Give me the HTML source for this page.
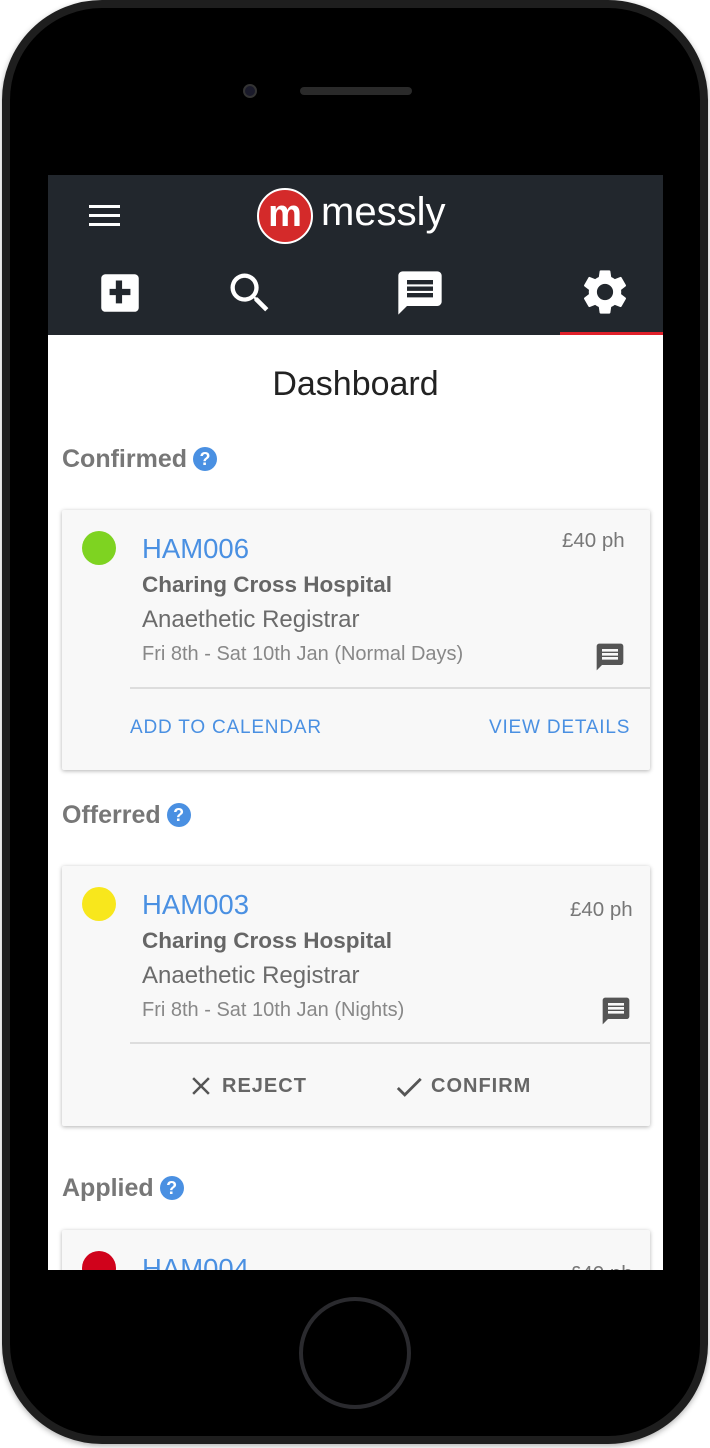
<!DOCTYPE html>
<html><head><meta charset="utf-8"><style>
*{margin:0;padding:0;box-sizing:border-box}
body{width:710px;height:1448px;background:#fff;position:relative;overflow:hidden;font-family:"Liberation Sans",sans-serif}
.a{position:absolute}
.phone{left:2px;top:0;width:706px;height:1444px;background:#000;border-radius:100px;border:8px solid #1e1e1e;box-shadow:0 2px 6px rgba(0,0,0,.3)}
.screen{left:48px;top:175px;width:615px;height:1095px;background:#fff;overflow:hidden}
.hdr{left:0;top:0;width:615px;height:160px;background:#22272d}
.sec{color:#777;font-weight:bold;font-size:25px}
.q{display:inline-block;width:24px;height:24px;border-radius:50%;background:#4a90e2;color:#fff;font-size:18px;text-align:center;line-height:24px;font-weight:bold;vertical-align:2px;margin-left:6px}
.card{left:14px;width:588px;height:260px;background:#f8f8f8;box-shadow:0 1px 4px rgba(0,0,0,.3);border-radius:2px}
.dot{width:34px;height:34px;border-radius:50%}
.id{color:#4a90e2;font-size:27.5px}
.h{color:#666;font-weight:bold;font-size:22.5px}
.r{color:#6b6b6b;font-size:24px}
.d{color:#888;font-size:20px}
.p{color:#777;font-size:20.5px}
.div{left:68px;width:520px;height:2px;background:#ddd}
.btn{color:#4a90e2;font-size:19px;letter-spacing:.8px}
.btn2{color:#666;font-size:20px;letter-spacing:1px;font-weight:bold}
</style></head><body>
<div class="a phone"></div>
<div class="a" style="left:243px;top:84px;width:14px;height:14px;border-radius:50%;background:#1a1a2a;border:2px solid #333"></div>
<div class="a" style="left:300px;top:87px;width:112px;height:8px;border-radius:4px;background:#2a2a2a"></div>
<div class="a" style="left:299px;top:1297px;width:112px;height:112px;border-radius:50%;border:4px solid #2a2a2e"></div>
<div class="a screen">
 <div class="a hdr">
  <div class="a" style="left:41px;top:30px;width:31px;height:3px;background:#fff;box-shadow:0 9px 0 #fff,0 18px 0 #fff"></div>
  <div class="a" style="left:209px;top:13px;width:56px;height:56px;border-radius:50%;background:#d42a2a;border:2px solid #fff;color:#fff;font-weight:bold;font-size:38px;text-align:center;line-height:48px">m</div>
  <div class="a" style="left:273px;top:15px;color:#fff;font-size:40px">messly</div>
  <svg class="a" style="left:47px;top:93px" width="50" height="50" viewBox="0 0 24 24"><path fill="#fff" d="M19 3H5c-1.1 0-2 .9-2 2v14c0 1.1.9 2 2 2h14c1.1 0 2-.9 2-2V5c0-1.1-.9-2-2-2zm-2 10h-4v4h-3v-4H7v-3h3V6h3v4h4v3z"/></svg>
  <svg class="a" style="left:176px;top:92px" width="52" height="52" viewBox="0 0 24 24"><path fill="#fff" d="M15.5 14h-.79l-.28-.27A6.47 6.47 0 0016 9.5 6.5 6.5 0 109.5 16c1.61 0 3.09-.59 4.23-1.57l.27.28v.79l5 4.99L20.49 19l-4.99-5zm-6 0C7.01 14 5 11.99 5 9.5S7.01 5 9.5 5 14 7.01 14 9.5 11.99 14 9.5 14z"/></svg>
  <svg class="a" style="left:346px;top:92px" width="52" height="52" viewBox="0 0 24 24"><path fill="#fff" d="M20 2H4c-1.1 0-2 .9-2 2v18l4-4h14c1.1 0 2-.9 2-2V4c0-1.1-.9-2-2-2zm-2 12H6v-2h12v2zm0-3H6V9h12v2zm0-3H6V6h12v2z"/></svg>
  <svg class="a" style="left:530px;top:90px" width="54" height="54" viewBox="0 0 24 24"><path fill="#fff" d="M19.14 12.94c.04-.3.06-.61.06-.94 0-.32-.02-.64-.07-.94l2.030-1.58a.49.49 0 00.12-.61l-1.92-3.32a.49.49 0 00-.59-.22l-2.39.96c-.5-.38-1.030-.7-1.62-.94l-.36-2.54a.48.48 0 00-.48-.41h-3.84c-.24 0-.43.17-.47.41l-.36 2.54c-.59.24-1.13.57-1.62.94l-2.39-.96a.49.49 0 00-.59.22L2.74 8.87a.47.47 0 00.12.61l2.03 1.58c-.05.3-.09.63-.09.94s.02.64.07.94l-2.03 1.58a.49.49 0 00-.12.61l1.92 3.32c.12.22.37.29.59.22l2.39-.96c.5.38 1.03.7 1.62.94l.36 2.54c.05.24.24.41.48.41h3.84c.24 0 .44-.17.47-.41l.36-2.54c.59-.24 1.13-.56 1.62-.94l2.39.96c.22.08.47 0 .59-.22l1.92-3.32a.47.47 0 00-.12-.61l-2.01-1.58zM12 15.6A3.6 3.6 0 1112 8.4a3.6 3.6 0 010 7.2z"/></svg>
  <div class="a" style="left:512px;top:157px;width:103px;height:3px;background:#e0202a"></div>
 </div>
 <div class="a" style="left:0;top:190px;width:615px;text-align:center;font-size:34px;color:#222">Dashboard</div>
 <div class="a sec" style="left:14px;top:270px">Confirmed<span class="q">?</span></div>
 <div class="a card" style="top:335px">
  <div class="a dot" style="left:20px;top:21px;background:#7ed321"></div>
  <div class="a id" style="left:80px;top:23px">HAM006</div>
  <div class="a p" style="left:500px;top:19px">£40 ph</div>
  <div class="a h" style="left:80px;top:62px">Charing Cross Hospital</div>
  <div class="a r" style="left:80px;top:96px">Anaethetic Registrar</div>
  <div class="a d" style="left:80px;top:133px">Fri 8th - Sat 10th Jan (Normal Days)</div>
  <svg class="a" style="left:532px;top:131px" width="32" height="32" viewBox="0 0 24 24"><path fill="#555" d="M20 2H4c-1.1 0-2 .9-2 2v18l4-4h14c1.1 0 2-.9 2-2V4c0-1.1-.9-2-2-2zm-2 12H6v-2h12v2zm0-3H6V9h12v2zm0-3H6V6h12v2z"/></svg>
  <div class="a div" style="top:177px"></div>
  <div class="a btn" style="left:68px;top:207px">ADD TO CALENDAR</div>
  <div class="a btn" style="left:427px;top:207px">VIEW DETAILS</div>
 </div>
 <div class="a sec" style="left:14px;top:626px">Offerred<span class="q">?</span></div>
 <div class="a card" style="top:691px">
  <div class="a dot" style="left:20px;top:21px;background:#f8e71c"></div>
  <div class="a id" style="left:80px;top:23px">HAM003</div>
  <div class="a p" style="left:508px;top:32px">£40 ph</div>
  <div class="a h" style="left:80px;top:62px">Charing Cross Hospital</div>
  <div class="a r" style="left:80px;top:96px">Anaethetic Registrar</div>
  <div class="a d" style="left:80px;top:133px">Fri 8th - Sat 10th Jan (Nights)</div>
  <svg class="a" style="left:538px;top:129px" width="32" height="32" viewBox="0 0 24 24"><path fill="#555" d="M20 2H4c-1.1 0-2 .9-2 2v18l4-4h14c1.1 0 2-.9 2-2V4c0-1.1-.9-2-2-2zm-2 12H6v-2h12v2zm0-3H6V9h12v2zm0-3H6V6h12v2z"/></svg>
  <div class="a div" style="top:176px"></div>
  <svg class="a" style="left:124px;top:205px" width="30" height="30" viewBox="0 0 24 24"><path fill="#555" d="M19 6.41L17.59 5 12 10.59 6.41 5 5 6.41 10.59 12 5 17.59 6.41 19 12 13.41 17.59 19 19 17.59 13.41 12z"/></svg>
  <div class="a btn2" style="left:160px;top:209px">REJECT</div>
  <svg class="a" style="left:330px;top:204px" width="34" height="34" viewBox="0 0 24 24"><path fill="#555" d="M9 16.17L4.83 12l-1.42 1.41L9 19 21 7l-1.41-1.41z"/></svg>
  <div class="a btn2" style="left:369px;top:209px">CONFIRM</div>
 </div>
 <div class="a sec" style="left:14px;top:999px">Applied<span class="q">?</span></div>
 <div class="a card" style="top:1055px">
  <div class="a dot" style="left:20px;top:21px;background:#d0021b"></div>
  <div class="a id" style="left:80px;top:23px">HAM004</div>
  <div class="a p" style="left:508px;top:32px">£40 ph</div>
 </div>
</div>
</body></html>
